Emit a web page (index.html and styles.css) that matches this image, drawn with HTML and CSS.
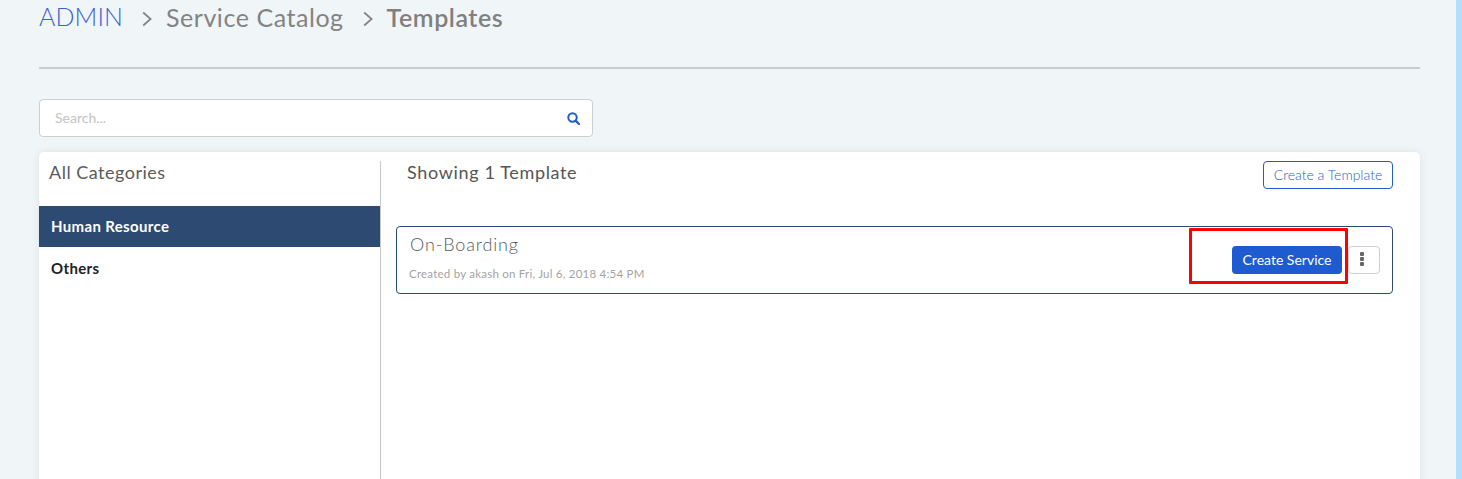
FILE: index.html
```html
<!DOCTYPE html>
<html lang="en">
<head>
<meta charset="utf-8">
<title>Templates</title>
<link rel="stylesheet" href="styles.css">
</head>
<body>
<div class="page">
  <main class="main">
    <nav class="crumbs">
      <a class="crumb-admin">ADMIN</a>
      <svg class="chev" width="10" height="16" viewBox="0 0 10 16"><path d="M1.2 1.5 L8.6 8 L1.2 14.5" fill="none" stroke="#858585" stroke-width="1.8"/></svg>
      <span class="crumb">Service Catalog</span>
      <svg class="chev" width="10" height="16" viewBox="0 0 10 16"><path d="M1.2 1.5 L8.6 8 L1.2 14.5" fill="none" stroke="#858585" stroke-width="1.8"/></svg>
      <span class="crumb crumb-current">Templates</span>
    </nav>
    <hr class="rule">
    <div class="search">
      <span class="search-text">Search...</span>
      <svg class="search-icon" width="13" height="13" viewBox="0 0 13 13"><circle cx="5.5" cy="5.5" r="4.2" fill="none" stroke="#1f5bd0" stroke-width="2"/><path d="M8.6 8.6 L12 12" stroke="#1f5bd0" stroke-width="2.2" stroke-linecap="round"/></svg>
    </div>
    <section class="panel">
      <aside class="side">
        <h2 class="side-title">All Categories</h2>
        <div class="cat cat-active">Human Resource</div>
        <div class="cat">Others</div>
      </aside>
      <div class="content">
        <div class="content-head">
          <h2 class="count">Showing 1 Template</h2>
          <button class="btn-outline">Create a Template</button>
        </div>
        <article class="tpl">
          <div class="tpl-info">
            <div class="tpl-name">On-Boarding</div>
            <div class="tpl-meta">Created by akash on Fri, Jul 6, 2018 4:54 PM</div>
          </div>
          <div class="tpl-actions">
            <button class="btn-primary">Create Service</button>
            <button class="btn-more" aria-label="More"><i class="dot"></i><i class="dot"></i><i class="dot"></i></button>
          </div>
          <div class="highlight"></div>
        </article>
      </div>
    </section>
  </main>
  <div class="strip"></div>
</div>
</body>
</html>
```
FILE: styles.css
```css
* { box-sizing: border-box; }
html, body { margin: 0; height: 479px; overflow: hidden; }
body { font-family: "Lato", "Noto Sans", sans-serif; background: #f0f5f8; }
.page { display: flex; height: 479px; overflow: hidden; }
.main { width: 1456px; padding: 0 36px 0 39px; flex: none; }
.strip { flex: 1; background: #b3defc; }

.crumbs { display: flex; align-items: center; height: 37px; }
.crumb-admin { font-size: 25px; color: #3a5fd8; font-weight: 300; letter-spacing: 0.1px; margin-top: -5px; }
.chev { margin: 0 14px 0 19px; flex: none; }
.crumb { font-size: 25px; color: #838383; letter-spacing: 0.55px; margin-top: -3px; }
.crumb-current { font-weight: 600; color: #808080; }

.rule { margin: 30px 0 0; border: 0; height: 2px; background: #c9cfd1; }

.search { margin-top: 30px; height: 38px; width: 554px; background: #fff; border: 1px solid #cbd0d3; border-radius: 4px; display: flex; align-items: center; justify-content: space-between; padding: 0 12px 0 15px; }
.search-text { font-size: 14px; color: #c4c4c4; margin-top: -2px; }

.panel { margin-top: 15px; height: 400px; background: #fff; border-radius: 5px; box-shadow: 0 0 8px rgba(0,0,0,.08); display: flex; padding-top: 9px; }
.side { width: 342px; flex: none; border-right: 1px solid #c9c9c9; }
.side-title { margin: -1px 0 1px; padding-left: 10px; font-size: 18px; font-weight: 400; color: #5b5b5b; line-height: 24px; height: 45px; letter-spacing: 0.5px; }
.cat { height: 42px; padding: 0 0 2px 12px; display: flex; align-items: center; font-size: 15px; font-weight: 700; color: #222; letter-spacing: 0.35px; }
.cat-active { height: 41px; background: #2d4a72; color: #fff; margin-bottom: 1px; }

.content { flex: 1; padding: 0 27px 0 15px; }
.content-head { display: flex; justify-content: space-between; align-items: flex-start; padding-left: 11px; height: 65px; }
.count { margin: -1px 0 0; font-size: 18px; font-weight: 400; line-height: 24px; color: #555; letter-spacing: 0.65px; }
.btn-outline { width: 130px; height: 28px; background: #fff; border: 1px solid #1f5bd0; border-radius: 4px; color: #2a5cd6; font: 300 14px "Lato", sans-serif; padding: 0 0 2px; }

.tpl { position: relative; height: 68px; border: 1px solid #2d4a72; border-radius: 4px; display: flex; justify-content: space-between; align-items: flex-start; padding: 0 12px 0 12px; }
.tpl-name { margin: 5px 0 0 1px; font-size: 18px; font-weight: 300; line-height: 24px; color: #565a62; letter-spacing: 0.85px; }
.tpl-meta { margin-top: 11px; font-size: 11.5px; line-height: 14px; color: #a3a3a3; letter-spacing: 0.23px; }
.tpl-actions { display: flex; gap: 6px; margin-top: 19px; }
.btn-primary { width: 110px; height: 28px; background: #1f5bd0; border: 0; border-radius: 4px; color: #fff; font: 400 14px "Lato", sans-serif; padding: 0 0 2px; }
.btn-more { width: 32px; height: 28px; background: #fff; border: 1px solid #d0d0d0; border-radius: 4px; display: flex; flex-direction: column; align-items: center; justify-content: center; gap: 1px; padding: 0 4px 3px 0; }
.dot { width: 4px; height: 4px; background: #666; border-radius: 1px; }
.highlight { position: absolute; left: 792px; top: 1px; width: 159px; height: 56px; border: 3px solid #f00; border-radius: 1px; }
```
